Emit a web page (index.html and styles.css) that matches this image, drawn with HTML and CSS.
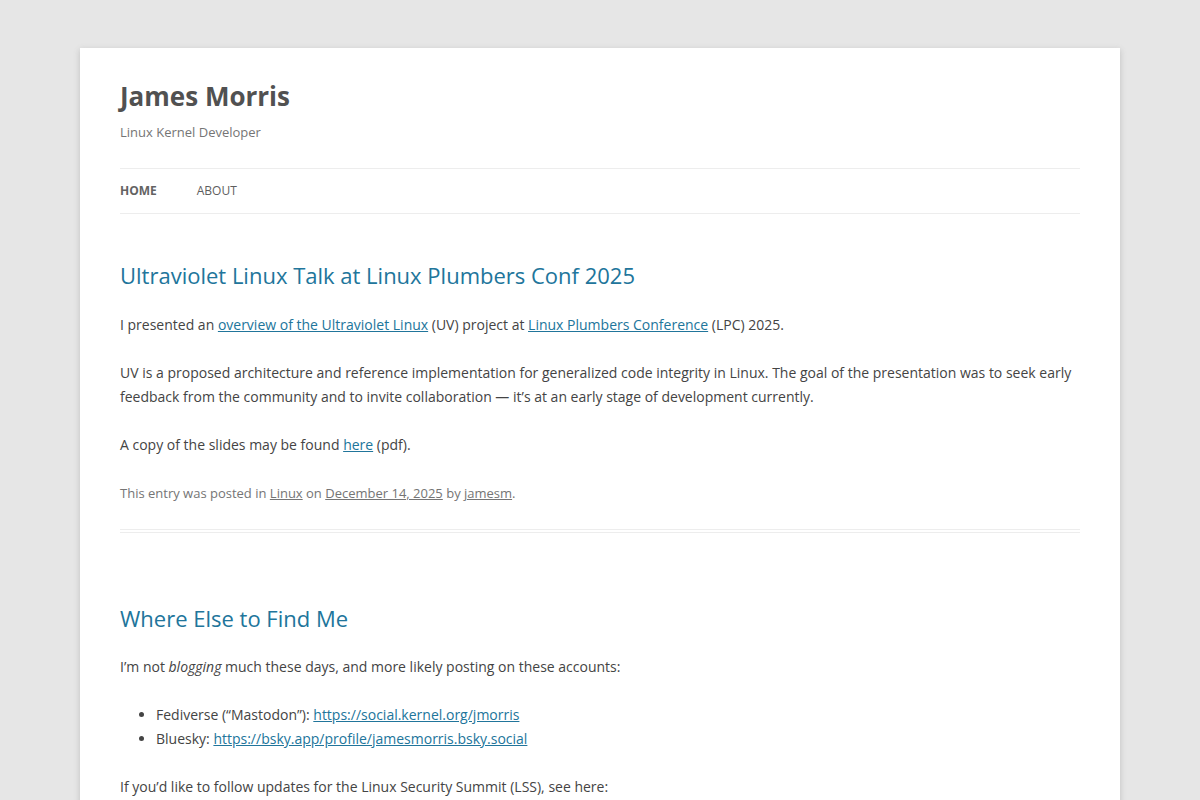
FILE: index.html
```html
<!DOCTYPE html>
<html lang="en-US">
<head>
    <meta charset="UTF-8">
    <meta name="viewport" content="width=device-width, initial-scale=1.0">
    <title>James Morris | Linux Kernel Developer</title>
    <link rel="stylesheet" href="styles.css">
</head>
<body>
    <div class="site">
        <header class="site-header">
            <h1 class="site-title"><a href="#">James Morris</a></h1>
            <h2 class="site-description">Linux Kernel Developer</h2>

            <nav class="main-navigation">
                <ul class="nav-menu">
                    <li class="current-menu-item"><a href="#">Home</a></li>
                    <li><a href="#">About</a></li>
                </ul>
            </nav>
        </header>

        <div class="site-content">
            <article class="post">
                <header class="entry-header">
                    <h1 class="entry-title"><a href="#">Ultraviolet Linux Talk at Linux Plumbers Conf 2025</a></h1>
                </header>

                <div class="entry-content">
                    <p>I presented an <a href="#">overview of the Ultraviolet Linux</a> (UV) project at <a href="#">Linux Plumbers Conference</a> (LPC) 2025.</p>
                    <p>UV is a proposed architecture and reference implementation for generalized code integrity in Linux. The goal of the presentation was to seek early feedback from the community and to invite collaboration — it’s at an early stage of development currently.</p>
                    <p>A copy of the slides may be found <a href="#">here</a> (pdf).</p>
                </div>

                <footer class="entry-meta">
                    This entry was posted in <a href="#">Linux</a> on <a href="#">December 14, 2025</a> by <a href="#">jamesm</a>.
                </footer>
            </article>

            <article class="post">
                <header class="entry-header">
                    <h1 class="entry-title"><a href="#">Where Else to Find Me</a></h1>
                </header>

                <div class="entry-content">
                    <p>I’m not <em>blogging</em> much these days, and more likely posting on these accounts:</p>
                    <ul>
                        <li>Fediverse (“Mastodon”): <a href="#">https://social.kernel.org/jmorris</a></li>
                        <li>Bluesky: <a href="#">https://bsky.app/profile/jamesmorris.bsky.social</a></li>
                    </ul>
                    <p>If you’d like to follow updates for the Linux Security Summit (LSS), see here:</p>
                    <ul>
                        <li>Fediverse: <a href="#">https://social.kernel.org/LinuxSecSummit</a></li>
                        <li>Bluesky: <a href="#">https://bsky.app/profile/lssummit.bsky.social</a></li>
                    </ul>
                </div>
            </article>
        </div>
    </div>
</body>
</html>
```

FILE: styles.css
```css
html {
    font-size: 14px;
}

body {
    font-family: "Open Sans", Helvetica, Arial, sans-serif;
    background-color: #e6e6e6;
    color: #444;
    margin: 0;
    padding: 0;
    font-size: 14px;
    line-height: 1.714285714;
}

a {
    color: #21759b;
}

.site {
    max-width: 960px;
    margin: 48px auto;
    padding: 0 40px;
    background-color: #fff;
    box-shadow: 0 2px 6px rgba(100, 100, 100, 0.3);
    overflow: hidden;
}

.site-header {
    padding: 24px 0;
}

.site-title {
    margin: 0;
    font-size: 26px;
    line-height: 1.846153846;
    font-weight: bold;
}

.site-title a {
    color: #515151;
    text-decoration: none;
}

.site-description {
    margin: 0;
    font-size: 13px;
    line-height: 1.846153846;
    font-weight: normal;
    color: #757575;
}

.main-navigation {
    margin-top: 24px;
}

.nav-menu {
    display: flex;
    list-style: none;
    margin: 0;
    padding: 0;
    border-top: 1px solid #ededed;
    border-bottom: 1px solid #ededed;
}

.nav-menu li {
    margin: 0 40px 0 0;
}

.nav-menu a {
    display: block;
    font-size: 12px;
    line-height: 3.692307692;
    text-transform: uppercase;
    text-decoration: none;
    color: #5e5e5e;
}

.nav-menu .current-menu-item a {
    color: #636363;
    font-weight: bold;
}

.site-content {
    margin-top: 24px;
}

.post {
    margin-bottom: 72px;
    padding-bottom: 24px;
    border-bottom: 4px double #ededed;
}

.entry-header {
    margin-bottom: 24px;
}

.entry-title {
    margin: 0;
    font-size: 22px;
    line-height: 1.2;
    font-weight: normal;
}

.entry-title a {
    color: #21759b;
    text-decoration: none;
}

.entry-content p {
    margin: 0 0 24px;
}

.entry-content ul {
    margin: 0 0 24px;
    padding: 0;
    list-style: disc outside;
}

.entry-content li {
    margin: 0 0 0 36px;
}

.entry-meta {
    margin-top: 24px;
    font-size: 13px;
    line-height: 1.846153846;
    color: #757575;
}

.entry-meta a {
    color: #757575;
}
```
